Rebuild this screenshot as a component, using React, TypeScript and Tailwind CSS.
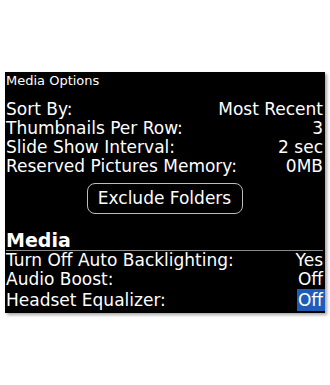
export default function App() {
  const top = [
    ["Sort By:", "Most Recent"],
    ["Thumbnails Per Row:", "3"],
    ["Slide Show Interval:", "2 sec"],
    ["Reserved Pictures Memory:", "0MB"],
  ];

  return (
    <div className="h-[385px] w-[330px] bg-white pl-[5px] pt-[72px] font-['DejaVu_Sans',sans-serif]">
      <div className="flex h-[241px] w-[320px] flex-col bg-black pl-[1px] pr-[2px] text-white shadow-[2px_2px_3px_rgba(0,0,0,0.35)]">
        <div className="h-[18px] text-[13px] leading-[18px]">Media Options</div>
        <div className="mt-[10px]">
          {top.map(([label, value]) => (
            <div key={label} className="flex h-[19px] items-center justify-between text-[17px] leading-[19px]">
              <span>{label}</span>
              <span>{value}</span>
            </div>
          ))}
        </div>
        <div className="mt-[7px] flex justify-center">
          <button className="h-[31px] w-[156px] rounded-[8px] border border-[#bdbdbd] text-[17px] text-white">
            Exclude Folders
          </button>
        </div>
        <div className="mt-[15px] h-[22px] border-b border-[#8a8a8a] text-[19px] font-bold leading-[22px]">
          Media
        </div>
        <div className="flex h-[19px] items-center justify-between text-[17px] leading-[19px]">
          <span>Turn Off Auto Backlighting:</span>
          <span>Yes</span>
        </div>
        <div className="flex h-[19px] items-center justify-between text-[17px] leading-[19px]">
          <span>Audio Boost:</span>
          <span>Off</span>
        </div>
        <div className="flex h-[22px] items-center justify-between text-[17px] leading-[22px]">
          <span>Headset Equalizer:</span>
          <span className="-mr-[2px] bg-[#1f5cb8] pl-[1px] pr-[2px]">Off</span>
        </div>
      </div>
    </div>
  );
}
